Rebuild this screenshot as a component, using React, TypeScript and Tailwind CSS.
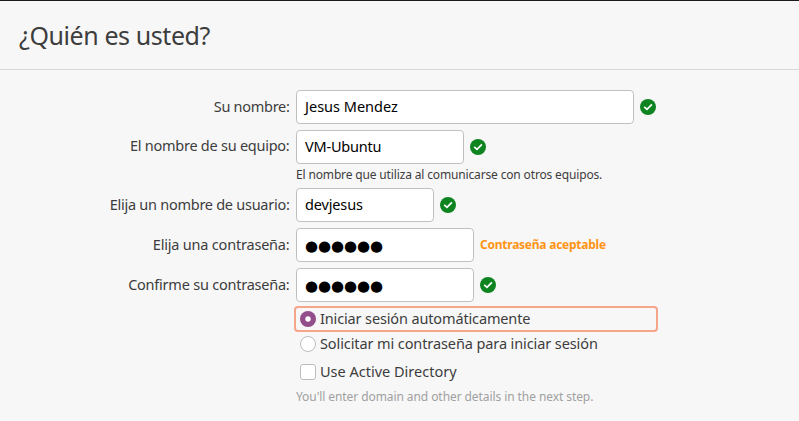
import type { ReactNode } from "react";

function Check() {
  return (
    <svg width="16" height="16" viewBox="0 0 16 16" className="shrink-0">
      <circle cx="8" cy="8" r="8" fill="#0e8420" />
      <path d="M4.2 7.8 L7 10.4 L11.9 5.4" fill="none" stroke="#fff" strokeWidth="1.7" />
    </svg>
  );
}

function Row({ label, labelClass, width, children, after }: { label: string; labelClass: string; width: string; children: ReactNode; after: ReactNode }) {
  return (
    <div className="flex h-[34px] items-center">
      <div className={`mr-1.5 flex w-[290px] justify-end whitespace-nowrap pr-[0.5px] ${labelClass}`}>{label}</div>
      <div className={`mr-1.5 flex h-[34px] items-center rounded-[4px] border border-[#c0c0c0] bg-white pl-2 text-black ${width}`}>{children}</div>
      {after}
    </div>
  );
}

const dots = "●●●●●●";

export default function App() {
  return (
    <div className="h-[421px] w-[799px] overflow-hidden border-t border-[#1d1a1e] bg-[#f7f7f7] font-['Noto_Sans',sans-serif] text-[14.5px] leading-5 text-[#3d3d3d]">
      <header className="flex h-[69px] items-center border-b border-[#dadada] pl-[19px]">
        <h1 className="whitespace-nowrap text-[25px] leading-8 tracking-[-0.42px]">¿Quién es usted?</h1>
      </header>
      <main className="pt-5">
        <Row label="Su nombre:" labelClass="pb-0.5 tracking-[-0.3px]" width="w-[338px]" after={<Check />}>
          <span className="pb-0.5">Jesus Mendez</span>
        </Row>
        <div className="h-1.5" />
        <Row label="El nombre de su equipo:" labelClass="pb-1 tracking-[-0.25px]" width="w-[168px]" after={<Check />}>
          <span className="pb-0.5 tracking-[-0.2px]">VM-Ubuntu</span>
        </Row>
        <p className="h-6 whitespace-nowrap pl-[296px] text-[12px] leading-[22px] tracking-[-0.15px]">El nombre que utiliza al comunicarse con otros equipos.</p>
        <Row label="Elija un nombre de usuario:" labelClass="pb-0.5 tracking-[-0.27px]" width="w-[138px]" after={<Check />}>
          <span className="pb-0.5 tracking-[-0.15px]">devjesus</span>
        </Row>
        <div className="h-1.5" />
        <Row label="Elija una contraseña:" labelClass="pb-0.5 tracking-[-0.2px]" width="w-[178px]" after={<span className="whitespace-nowrap text-[12px] font-bold tracking-[-0.24px] text-[#ff9414]">Contraseña aceptable</span>}>
          <span className="pt-0.5 font-['DejaVu_Sans',sans-serif] text-[15px] tracking-[-0.1px]">{dots}</span>
        </Row>
        <div className="h-1.5" />
        <Row label="Confirme su contraseña:" labelClass="pb-0.5 tracking-[-0.23px]" width="w-[178px]" after={<Check />}>
          <span className="pt-0.5 font-['DejaVu_Sans',sans-serif] text-[15px] tracking-[-0.1px]">{dots}</span>
        </Row>
        <div className="ml-[294px] mt-1 flex h-[26px] w-[364px] items-center rounded-[4px] border-2 border-[#f4a58a] pl-1">
          <svg width="16" height="16" viewBox="0 0 16 16" className="mr-1 shrink-0">
            <circle cx="8" cy="8" r="8" fill="#924d8b" />
            <circle cx="8" cy="8" r="2.7" fill="#fff" />
          </svg>
          <span className="whitespace-nowrap pb-0.5 tracking-[-0.14px]">Iniciar sesión automáticamente</span>
        </div>
        <div className="flex h-6 items-center pl-[300px]">
          <i className="mr-1 size-4 shrink-0 rounded-full border border-[#bcbcbc] bg-white" />
          <span className="whitespace-nowrap pb-0.5 tracking-[-0.1px]">Solicitar mi contraseña para iniciar sesión</span>
        </div>
        <div className="mt-1 flex h-6 items-center pl-[300px]">
          <i className="mr-1 size-4 shrink-0 rounded-[3px] border border-[#bcbcbc] bg-white" />
          <span className="whitespace-nowrap pb-0.5">Use Active Directory</span>
        </div>
        <p className="mt-[3px] whitespace-nowrap pl-[296px] text-[12px] tracking-[-0.08px] text-[#a0a0a0]">You'll enter domain and other details in the next step.</p>
      </main>
    </div>
  );
}
